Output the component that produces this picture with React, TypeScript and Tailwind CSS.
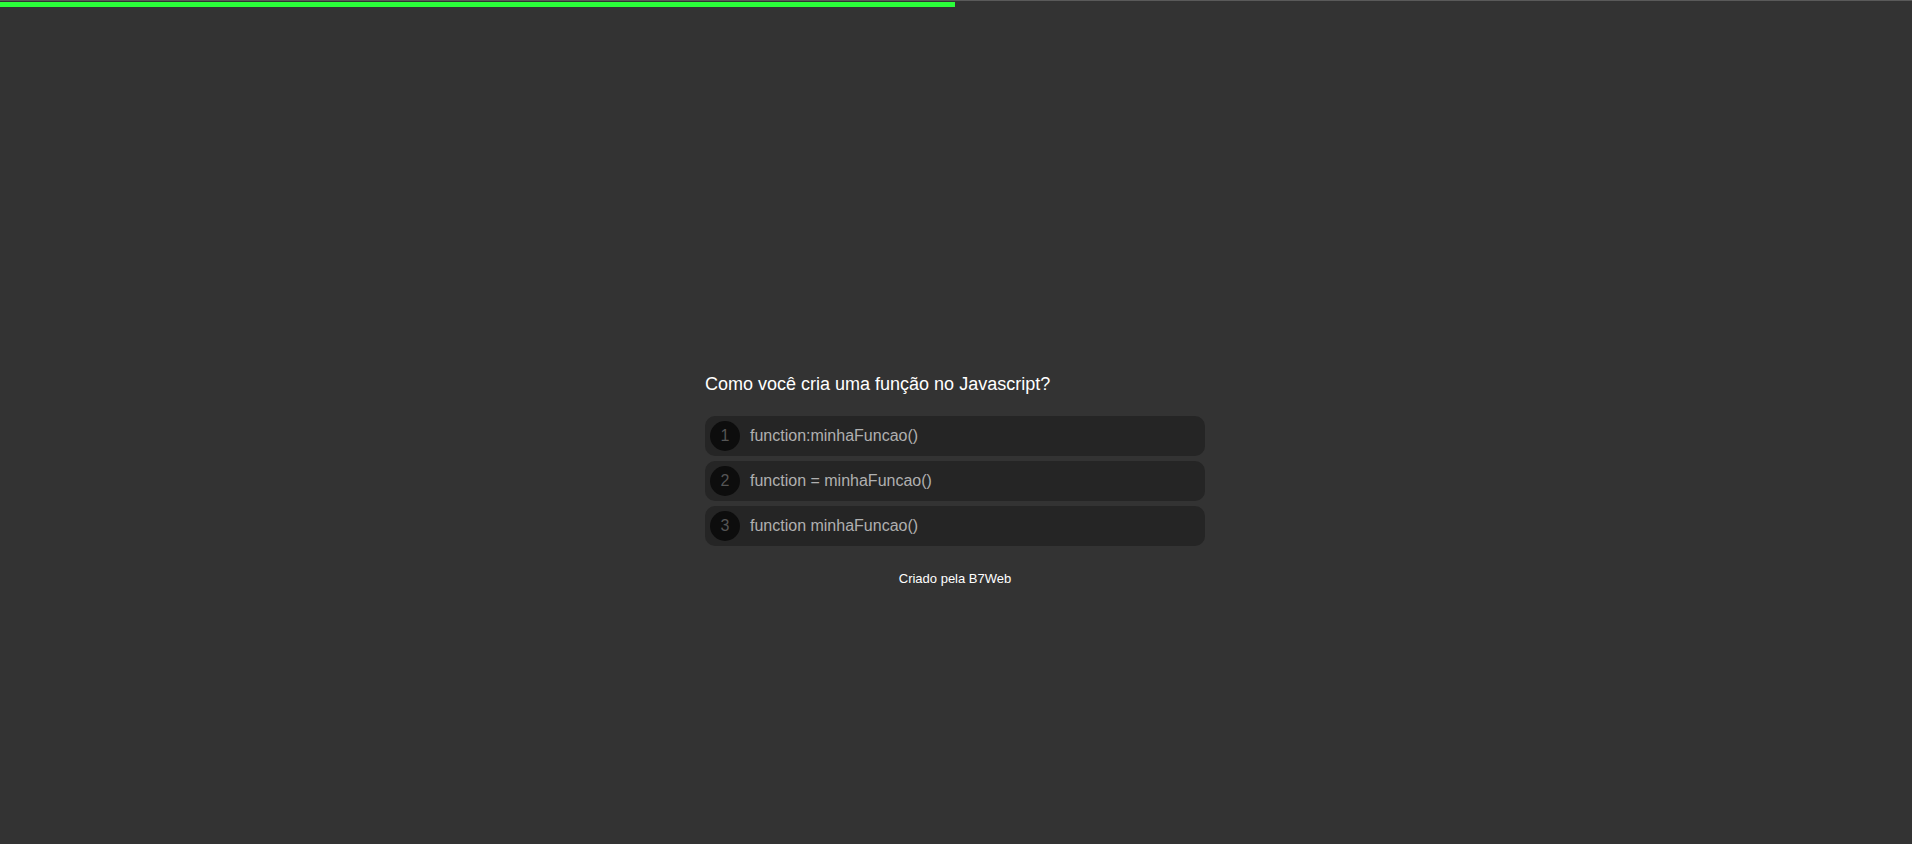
export default function App() {
  const options = ["function:minhaFuncao()", "function = minhaFuncao()", "function minhaFuncao()"]

  return (
    <div className="min-h-[844px] w-full bg-[#333333] font-['Liberation_Sans',Arial,sans-serif]">
      {/* barra de progresso */}
      <div className="h-px w-full bg-[#5a5a5a]" />
      <div className="mt-px h-[5px] w-full">
        <div className="h-full w-[955px] bg-[#2bff3a]" />
      </div>

      <div className="flex justify-center pt-[366px]">
        <div className="w-[502px] pr-[2px]">
          <h1 className="text-[18px] leading-[22px] text-white">Como você cria uma função no Javascript?</h1>
          <div className="mt-[21px] flex flex-col gap-[5px]">
            {options.map((opt, i) => (
              <div key={opt} className="flex h-[40px] items-center gap-[10px] rounded-[10px] bg-[#252525] px-[5px]">
                <div className="flex h-[30px] w-[30px] items-center justify-center rounded-full bg-[#0d0d0d] text-[16px] text-[#555555]">
                  {i + 1}
                </div>
                <span className="text-[16px] text-[#b0b0b0]">{opt}</span>
              </div>
            ))}
          </div>
          <p className="mt-[23px] text-center text-[13px] text-white">Criado pela B7Web</p>
        </div>
      </div>
    </div>
  )
}
